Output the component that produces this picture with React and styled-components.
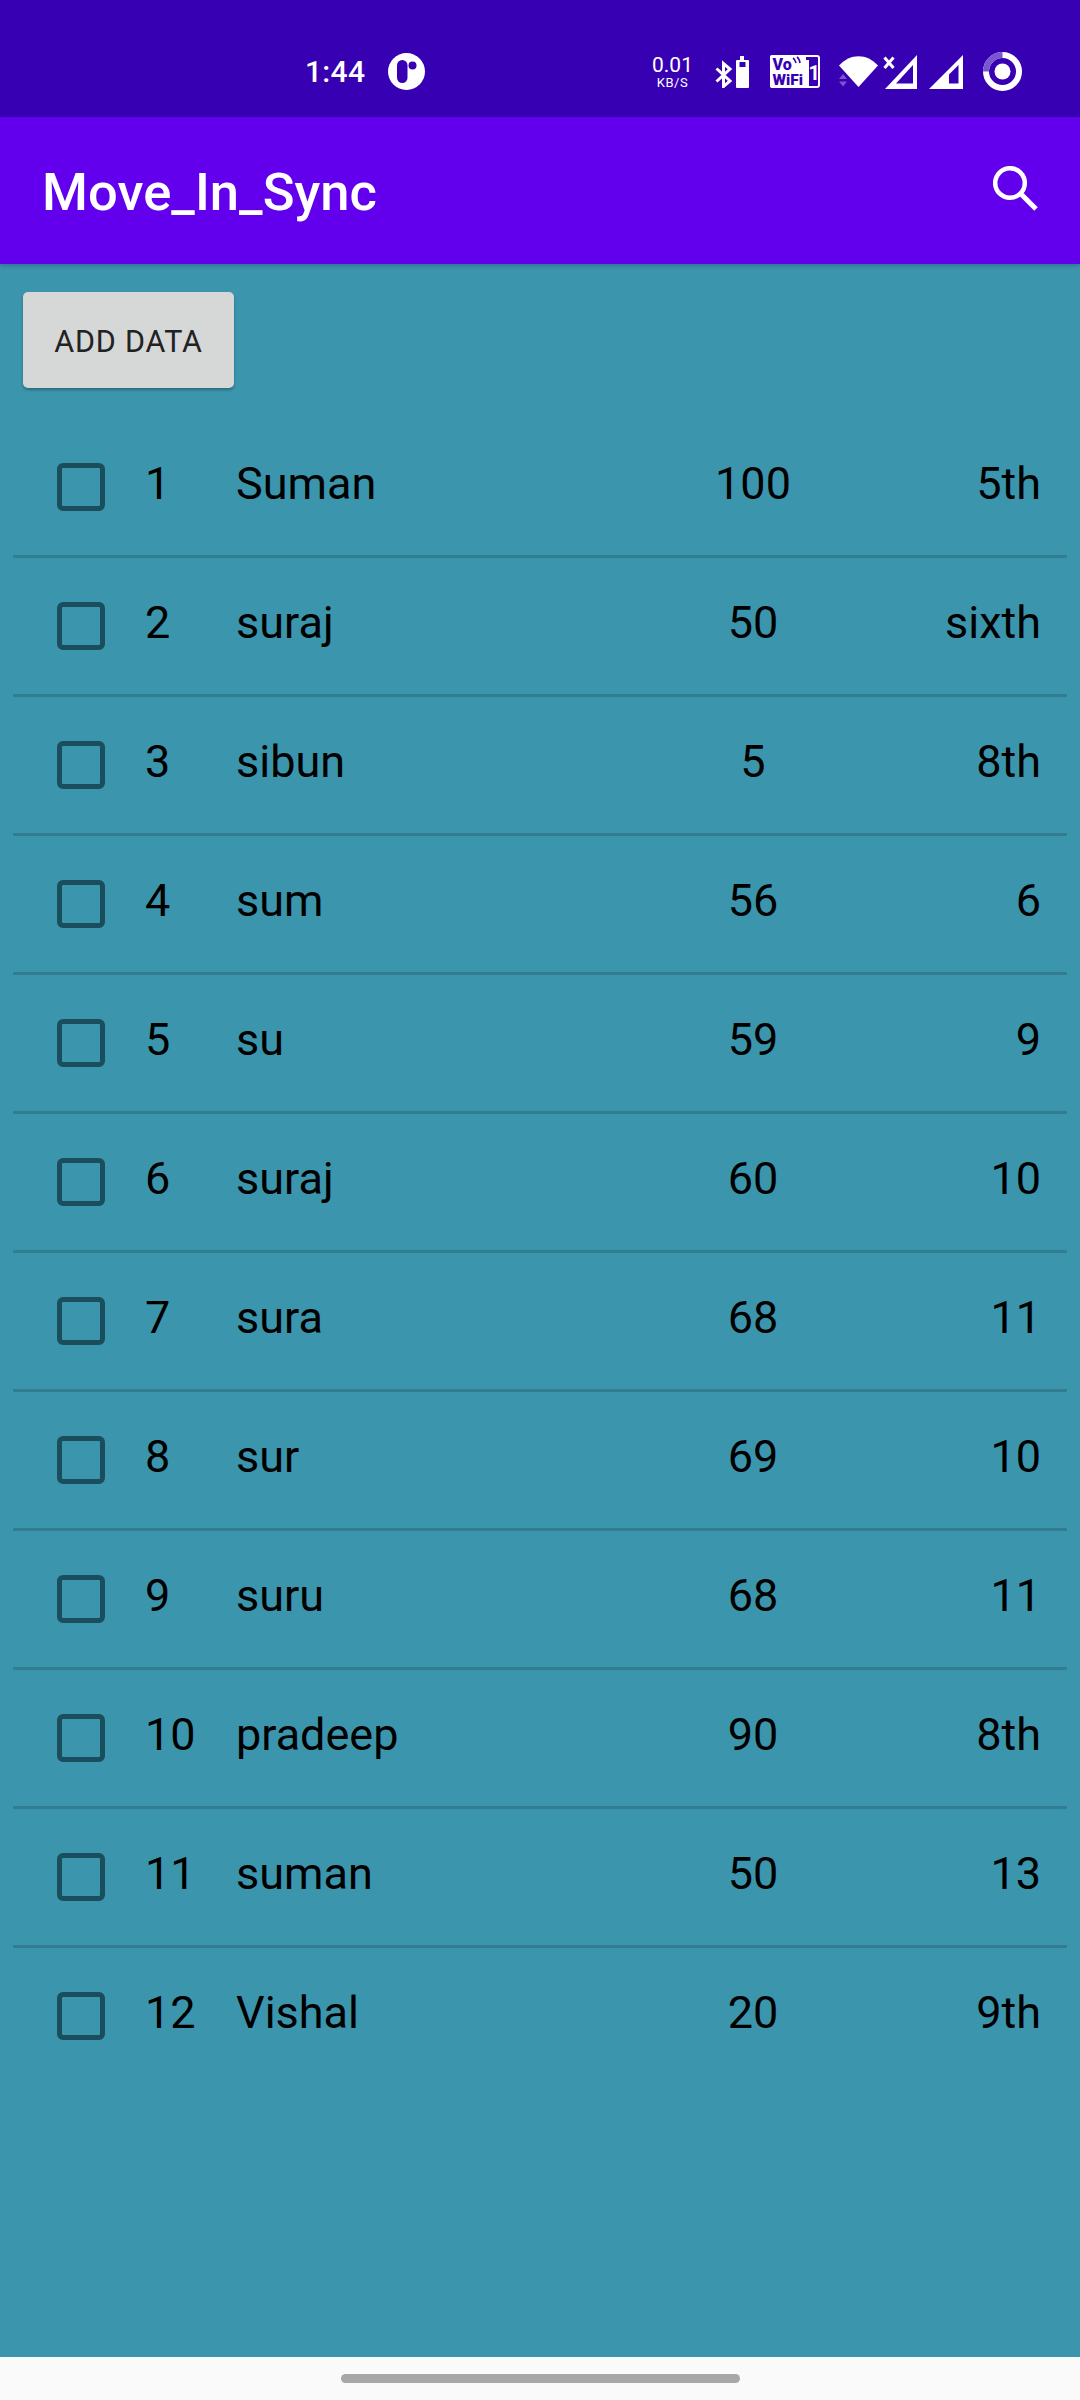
import React from "react";
import styled, { createGlobalStyle } from "styled-components";

const GlobalStyle = createGlobalStyle`
  html, body {
    margin: 0;
    padding: 0;
    background: #3b95ad;
    font-family: Roboto, "Liberation Sans", sans-serif;
  }
`;

const Screen = styled.div`
  width: 1080px;
  height: 2400px;
  display: flex;
  flex-direction: column;
  overflow: hidden;
  background: #3b95ad;
`;

// status bar
const StatusBar = styled.div`
  height: 117px;
  flex: none;
  box-sizing: border-box;
  padding: 26px 58px 0 305px;
  display: flex;
  align-items: center;
  justify-content: space-between;
  background: #3700b3;
  color: #ffffff;
`;

const StatusGroup = styled.div`
  display: flex;
  align-items: center;
`;

const StatusIcon = styled.span`
  display: flex;
  margin-left: ${(p) => p.$ml || 0}px;
`;

const Clock = styled.span`
  width: 61px;
  font-size: 30px;
  font-weight: 500;
  line-height: 32px;
  letter-spacing: 0.3px;
`;

const NetSpeed = styled.div`
  width: 39px;
  display: flex;
  flex-direction: column;
  align-items: center;
`;

const NetValue = styled.span`
  font-size: 21px;
  line-height: 21px;
`;

const NetUnit = styled.span`
  font-size: 13px;
  line-height: 13px;
  letter-spacing: 0.6px;
`;

const AppBar = styled.header`
  height: 147px;
  flex: none;
  box-sizing: border-box;
  padding: 0 42px 0 42px;
  display: flex;
  align-items: center;
  justify-content: space-between;
  background: #6200ee;
  box-shadow: 0 2px 4px rgba(0, 0, 0, 0.2);
  position: relative;
`;

const Title = styled.h1`
  margin: 3px 0 0;
  font-size: 52.5px;
  font-weight: 500;
  letter-spacing: 0.05px;
  color: #ffffff;
`;

const SearchWrap = styled.span`
  display: flex;
  margin-bottom: 4px;
`;

const Content = styled.main`
  flex: 1;
  display: flex;
  flex-direction: column;
  padding: 28px 13px 0;
`;

const AddButton = styled.button`
  width: 211px;
  height: 96px;
  margin-left: 10px;
  margin-bottom: 31px;
  padding: 2px 0 0;
  border: none;
  border-radius: 5px;
  background: #d6d7d7;
  box-shadow: 0 2px 3px rgba(0, 0, 0, 0.28);
  color: #222222;
  font-family: inherit;
  font-size: 30.5px;
  font-weight: 400;
  letter-spacing: 0.8px;
`;

const List = styled.div`
  display: flex;
  flex-direction: column;
`;

const Row = styled.div`
  height: 139px;
  box-sizing: border-box;
  padding: 40px 26px 0 44px;
  display: grid;
  grid-template-columns: 88px 91px 1fr 80px 248px;
  align-items: start;
  border-bottom: 3px solid ${(p) => (p.$last ? "transparent" : "#327d91")};
  font-size: 45px;
  line-height: 50px;
  color: #000000;
`;

const Check = styled.span`
  width: 48px;
  height: 48px;
  box-sizing: border-box;
  margin-top: 4px;
  border: 5px solid #1b4e5c;
  border-radius: 6px;
`;

const Marks = styled.span`
  text-align: center;
`;

const Standard = styled.span`
  text-align: right;
`;

const NavArea = styled.div`
  height: 43px;
  flex: none;
  display: flex;
  justify-content: center;
  padding-top: 17px;
  box-sizing: border-box;
  background: #fafafa;
`;

const NavPill = styled.div`
  width: 399px;
  height: 9px;
  border-radius: 5px;
  background: #a8a8a8;
`;

const rows = [
  [1, "Suman", 100, "5th"],
  [2, "suraj", 50, "sixth"],
  [3, "sibun", 5, "8th"],
  [4, "sum", 56, "6"],
  [5, "su", 59, "9"],
  [6, "suraj", 60, "10"],
  [7, "sura", 68, "11"],
  [8, "sur", 69, "10"],
  [9, "suru", 68, "11"],
  [10, "pradeep", 90, "8th"],
  [11, "suman", 50, "13"],
  [12, "Vishal", 20, "9th"],
];

// status bar drawings
const AppDot = () => (
  <svg width="37" height="37" viewBox="0 0 37 37">
    <circle cx="18.5" cy="18.5" r="18.5" fill="#fff" />
    <rect x="9" y="7" width="10.5" height="23" rx="5.2" fill="#3700b3" />
    <circle cx="24.5" cy="12.5" r="4" fill="#3700b3" />
  </svg>
);

const BluetoothBattery = () => (
  <svg width="34" height="32" viewBox="0 0 34 32">
    <path d="M1.5 12.5L15 25l-6.5 5.5V7.5L15 13 1.5 25.5" fill="none" stroke="#fff" strokeWidth="3" />
    <path d="M25 4V0h4v4h4a1 1 0 0 1 1 1v26a1 1 0 0 1-1 1H22a1 1 0 0 1-1-1V5a1 1 0 0 1 1-1z" fill="#fff" />
    <rect x="24.5" y="6" width="6" height="5" fill="#3700b3" />
  </svg>
);

const VoWifi = () => (
  <svg width="50" height="33" viewBox="0 0 50 33">
    <rect x="1" y="1" width="48" height="31" rx="2" fill="#3700b3" stroke="#fff" strokeWidth="2" />
    <path d="M2 0h34v5h3v28H2a2 2 0 0 1-2-2V2a2 2 0 0 1 2-2z" fill="#fff" />
    <text x="2.5" y="15" fontFamily="Roboto, sans-serif" fontWeight="900" fontSize="16" fill="#3700b3">Vo</text>
    <text x="2.5" y="30" fontFamily="Roboto, sans-serif" fontWeight="900" fontSize="15.5" fill="#3700b3">WiFi</text>
    <path d="M23 3c1.5 1 2.5 2.5 3 5M27 2c1.5 1 2.5 3 3 6" fill="none" stroke="#3700b3" strokeWidth="1.6" />
    <text x="38.5" y="25" fontFamily="Roboto, sans-serif" fontWeight="700" fontSize="20" fill="#fff">1</text>
  </svg>
);

const Wifi = () => (
  <svg width="39" height="31" viewBox="0 0 39 31">
    <path d="M0 9.5C11 -3 28 -3 39 9.5L19.5 31z" fill="#fff" />
    <path d="M0 23l4-5 4 5zM0 25.5l4 5 4-5z" fill="#7a55cf" />
  </svg>
);

const SignalX = () => (
  <svg width="34" height="34" viewBox="0 0 34 34">
    <path d="M2 34L34 0v34zM13 28.5h17V10z" fillRule="evenodd" fill="#fff" />
    <path d="M1.5 2.5l9 10.5M10.5 2.5l-9 10.5" stroke="#fff" strokeWidth="3" fill="none" />
  </svg>
);

const Signal = () => (
  <svg width="34" height="34" viewBox="0 0 34 34">
    <path d="M0 34L34 0v34zM20 28.5h9.5V10l-9.5 9.5z" fillRule="evenodd" fill="#fff" />
  </svg>
);

const Ring = () => (
  <svg width="39" height="39" viewBox="0 0 39 39">
    <circle cx="19.5" cy="19.5" r="16.5" fill="none" stroke="#fff" strokeWidth="6" />
    <path d="M19.5 3A16.5 16.5 0 0 0 3 19.5" fill="none" stroke="#7a55cf" strokeWidth="6" />
    <circle cx="19.5" cy="19.5" r="8" fill="#fff" />
  </svg>
);

const SearchIcon = () => (
  <svg width="45" height="45" viewBox="0 0 45 45">
    <circle cx="17" cy="17" r="14.8" fill="none" stroke="#fff" strokeWidth="4.5" />
    <path d="M27 27l16 16" fill="none" stroke="#fff" strokeWidth="5" />
  </svg>
);

const App = () => (
  <Screen>
    <GlobalStyle />
    <StatusBar>
      <StatusGroup>
        <Clock>1:44</Clock>
        <StatusIcon $ml={22}>
          <AppDot />
        </StatusIcon>
      </StatusGroup>
      <StatusGroup>
        <NetSpeed>
          <NetValue>0.01</NetValue>
          <NetUnit>KB/S</NetUnit>
        </NetSpeed>
        <StatusIcon $ml={23}>
          <BluetoothBattery />
        </StatusIcon>
        <StatusIcon $ml={21}>
          <VoWifi />
        </StatusIcon>
        <StatusIcon $ml={19}>
          <Wifi />
        </StatusIcon>
        <StatusIcon $ml={5}>
          <SignalX />
        </StatusIcon>
        <StatusIcon $ml={12}>
          <Signal />
        </StatusIcon>
        <StatusIcon $ml={20}>
          <Ring />
        </StatusIcon>
      </StatusGroup>
    </StatusBar>
    <AppBar>
      <Title>Move_In_Sync</Title>
      <SearchWrap>
        <SearchIcon />
      </SearchWrap>
    </AppBar>
    <Content>
      <AddButton>ADD DATA</AddButton>
      <List>
        {rows.map(([id, name, marks, std], i) => (
          <Row key={id} $last={i === rows.length - 1}>
            <Check />
            <span>{id}</span>
            <span>{name}</span>
            <Marks>{marks}</Marks>
            <Standard>{std}</Standard>
          </Row>
        ))}
      </List>
    </Content>
    <NavArea>
      <NavPill />
    </NavArea>
  </Screen>
);

export default App;
